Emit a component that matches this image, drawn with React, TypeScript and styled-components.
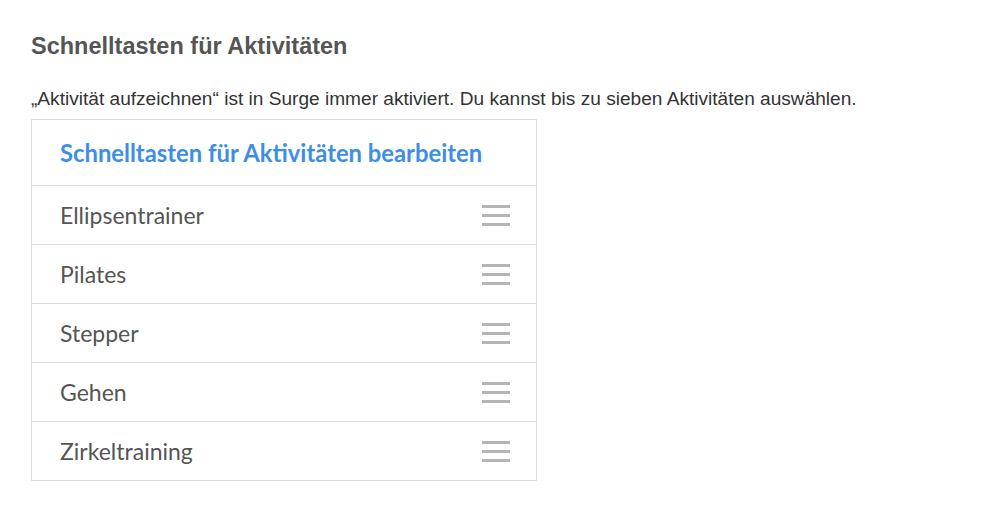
import React from 'react'
import styled, { createGlobalStyle } from 'styled-components'

const GlobalStyle = createGlobalStyle`
  body {
    margin: 0;
    background: #fff;
    font-family: "Liberation Sans", Arial, sans-serif;
  }
`

const Page = styled.div`
  padding: 32px 31px 0;
`

const Heading = styled.h2`
  margin: 0;
  font-size: 23.5px;
  line-height: 28px;
  font-weight: 700;
  color: #555;
`

const Note = styled.p`
  margin: 28px 0 0;
  font-size: 19.1px;
  line-height: 22px;
  color: #333;
`

const ListBox = styled.div`
  margin-top: 9px;
  width: 506px;
  border: 1px solid #dedede;
  box-sizing: border-box;
`

const EditLink = styled.a`
  display: flex;
  align-items: center;
  height: 65px;
  padding-left: 28px;
  font-family: Lato, "Open Sans", sans-serif;
  font-size: 23.8px;
  font-weight: 700;
  color: #3d8ee6;
  text-decoration: none;
  border-bottom: 1px solid #dedede;
`

const Row = styled.div`
  display: flex;
  align-items: center;
  justify-content: space-between;
  height: 58px;
  padding: 0 26px 0 28px;
  border-bottom: 1px solid #dedede;

  &:last-child {
    border-bottom: 0;
  }
`

const Label = styled.span`
  font-family: Lato, "Open Sans", sans-serif;
  font-size: 23px;
  color: #555;
`

const Handle = () => (
  <svg width="28" height="21" viewBox="0 0 28 21">
    <g stroke="#b5b5b5" strokeWidth="3">
      <line x1="0" y1="1.5" x2="28" y2="1.5" />
      <line x1="0" y1="10.5" x2="28" y2="10.5" />
      <line x1="0" y1="19.5" x2="28" y2="19.5" />
    </g>
  </svg>
)

const activities = ['Ellipsentrainer', 'Pilates', 'Stepper', 'Gehen', 'Zirkeltraining']

export default () => (
  <Page>
    <GlobalStyle />
    <Heading>Schnelltasten für Aktivitäten</Heading>
    <Note>„Aktivität aufzeichnen“ ist in Surge immer aktiviert. Du kannst bis zu sieben Aktivitäten auswählen.</Note>
    <ListBox>
      <EditLink href="#">Schnelltasten für Aktivitäten bearbeiten</EditLink>
      {activities.map((a, i) => (
        <Row key={i}>
          <Label>{a}</Label>
          <Handle />
        </Row>
      ))}
    </ListBox>
  </Page>
)
